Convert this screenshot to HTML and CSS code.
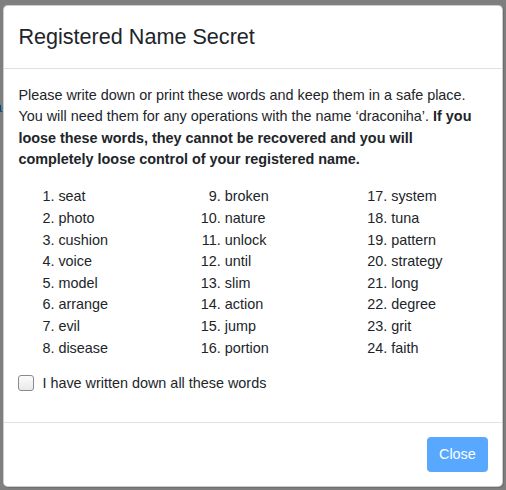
FILE: index.html
```html
<!DOCTYPE html>
<html>
<head>
<meta charset="utf-8">
<link rel="stylesheet" href="styles.css">
</head>
<body>
<span class="behind-link">a</span>
<div class="backdrop"></div>
<div class="modal">
  <div class="modal-header">
    <h4 class="modal-title">Registered Name Secret</h4>
  </div>
  <div class="modal-body">
    <p class="intro">Please write down or print these words and keep them in a safe place. You will need them for any operations with the name ‘draconiha’. <strong>If you loose these words, they cannot be recovered and you will completely loose control of your registered name.</strong></p>
    <div class="words">
      <ol start="1">
        <li>seat</li><li>photo</li><li>cushion</li><li>voice</li><li>model</li><li>arrange</li><li>evil</li><li>disease</li>
      </ol>
      <ol start="9">
        <li>broken</li><li>nature</li><li>unlock</li><li>until</li><li>slim</li><li>action</li><li>jump</li><li>portion</li>
      </ol>
      <ol start="17">
        <li>system</li><li>tuna</li><li>pattern</li><li>strategy</li><li>long</li><li>degree</li><li>grit</li><li>faith</li>
      </ol>
    </div>
    <label class="check">
      <span class="box"></span>
      <span>I have written down all these words</span>
    </label>
  </div>
  <div class="modal-footer">
    <button class="btn" disabled>Close</button>
  </div>
</div>
</body>
</html>
```
FILE: styles.css
```css
html, body {
  margin: 0;
  padding: 0;
}
body {
  width: 506px;
  height: 490px;
  overflow: hidden;
  background: #ffffff;
  font-family: "Liberation Sans", Arial, sans-serif;
  font-size: 14.4px;
  line-height: 1.5;
  color: #212529;
  position: relative;
}
.behind-link {
  position: absolute;
  left: -6px;
  top: 97px;
  color: #007bff;
  font-size: 14.4px;
}
.backdrop {
  position: absolute;
  inset: 0;
  background: rgba(0, 0, 0, 0.5);
}
.modal {
  position: absolute;
  left: 3px;
  top: 5px;
  width: 500px;
  box-sizing: border-box;
  background: #fff;
  border: 1px solid rgba(0, 0, 0, 0.2);
  border-radius: 4.8px;
  box-shadow: 1px 1px 1px rgba(0, 0, 0, 0.15);
  display: flex;
  flex-direction: column;
}
.modal-header {
  padding: 15.4px 14.4px 14.4px;
  border-bottom: 1px solid #dee2e6;
}
.modal-title {
  margin: 0;
  font-size: 21.6px;
  font-weight: 400;
  line-height: 1.5;
}
.modal-body {
  padding: 15.4px 14.4px 14.4px;
}
.intro {
  margin: 0 0 15.4px;
}
.intro strong {
  font-weight: 700;
}
.words {
  display: grid;
  grid-template-columns: 1fr 1fr 1fr;
  column-gap: 30px;
  margin-bottom: 13.4px;
}
.words ol {
  margin: 0;
  padding-left: 40px;
}
.check {
  display: flex;
  align-items: center;
  gap: 8px;
  margin-bottom: 13.4px;
}
.box {
  width: 14px;
  height: 14px;
  border: 1px solid #8a8a8a;
  border-radius: 3px;
  background: linear-gradient(#fbfbfb, #e9e9e9);
  flex: none;
}
.modal-footer {
  border-top: 1px solid #dee2e6;
  padding: 14.4px;
  display: flex;
  justify-content: flex-end;
}
.btn {
  font-family: "Liberation Sans", Arial, sans-serif;
  font-size: 14.4px;
  line-height: 1.5;
  padding: 5.4px 10.8px;
  border: 1px solid #007bff;
  border-radius: 3.6px;
  background: #007bff;
  color: #fff;
  opacity: 0.65;
}
```
